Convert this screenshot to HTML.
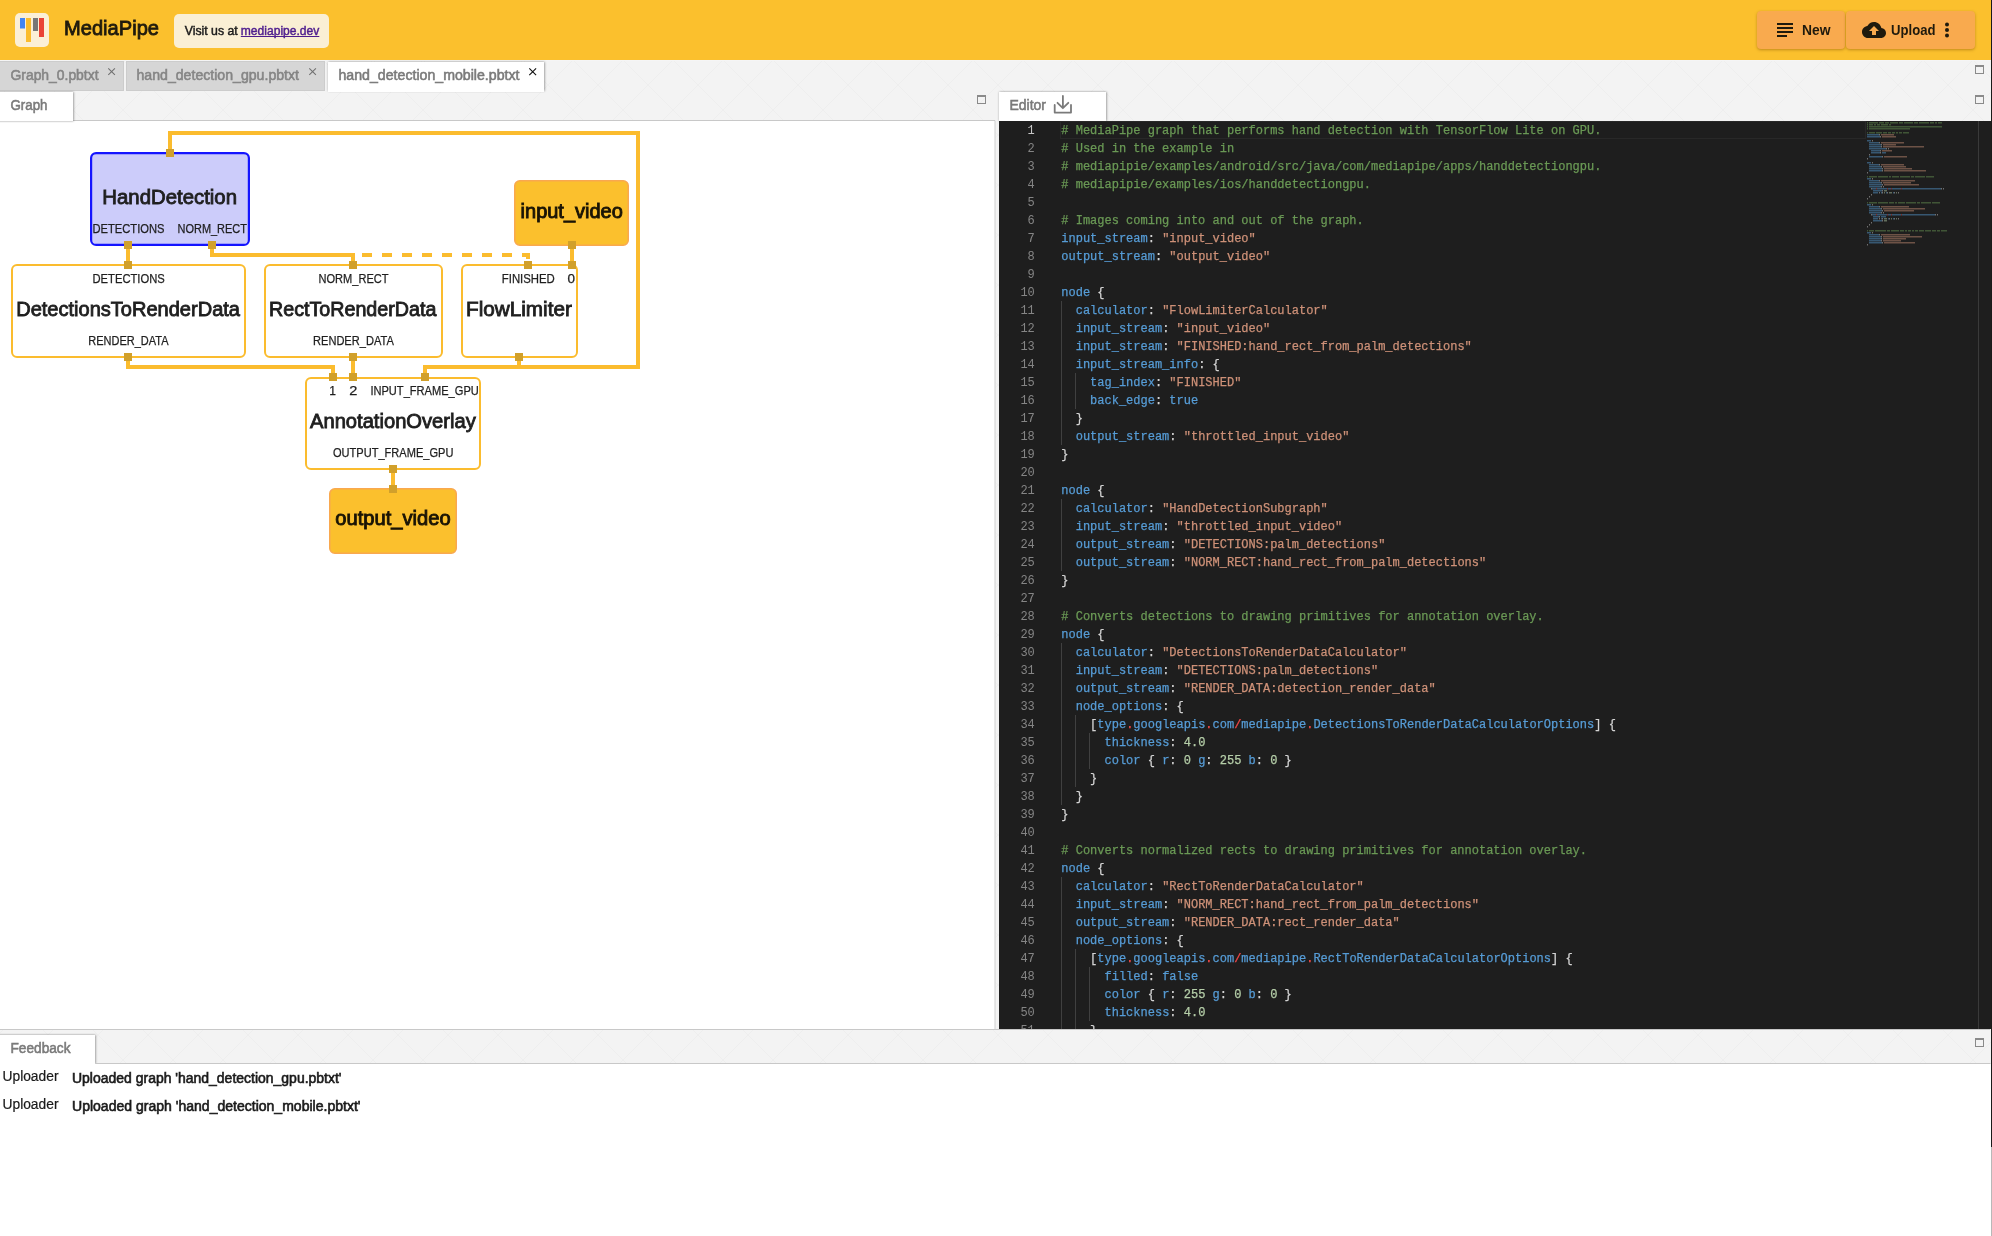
<!DOCTYPE html><html><head><meta charset="utf-8"><title>MediaPipe Visualizer</title><style>
html,body{margin:0;padding:0;width:1992px;height:1236px;overflow:hidden;background:#fff;font-family:"Liberation Sans", sans-serif;}
.abs{position:absolute;}
svg text{font-family:"Liberation Sans", sans-serif;}
svg .mono text, svg text.mono{font-family:"Liberation Mono", monospace;}
svg .mono text tspan{stroke-width:0.25px;}

</style></head><body>
<svg class="abs" style="left:0;top:0;will-change:transform" width="1992" height="1236" viewBox="0 0 1992 1236">
<defs>
<pattern id="dia" patternUnits="userSpaceOnUse" x="23" y="60" width="50" height="50">
<rect width="50" height="50" fill="#F3F3F3"/>
<path d="M0 0L50 50M50 0L0 50" stroke="#EEEEEE" stroke-width="1"/>
</pattern>
<filter id="btnsh" x="-10%" y="-10%" width="120%" height="140%"><feDropShadow dx="0" dy="1.5" stdDeviation="1.2" flood-color="#8a5a00" flood-opacity="0.45"/></filter>
<filter id="tabsh" x="-20%" y="-20%" width="140%" height="140%"><feDropShadow dx="0.5" dy="0" stdDeviation="1.1" flood-color="#000" flood-opacity="0.45"/></filter>
</defs>
<rect x="0" y="60" width="1992" height="1176" fill="url(#dia)"/>
<rect x="0" y="0" width="1992" height="60" fill="#FBC02D"/>
<rect x="15" y="13" width="34" height="34" rx="5" fill="#FBEFD6"/>
<rect x="20" y="18" width="5" height="10.5" fill="#4285F4"/>
<rect x="26" y="18" width="5" height="24" fill="#FBBC2D"/>
<rect x="33" y="18" width="5" height="13" fill="#777"/>
<rect x="39" y="18" width="5" height="19" fill="#EA4335"/>
<text x="64" y="35.3" font-size="21" font-weight="normal" fill="#1F1A0D" text-anchor="start" textLength="95" lengthAdjust="spacingAndGlyphs" stroke="#1F1A0D" stroke-width="0.85">MediaPipe</text>
<rect x="174" y="14" width="155" height="34" rx="5" fill="#FAEFD4"/>
<text x="184.7" y="35" font-size="12.3" font-weight="normal" fill="#1A1A1A" text-anchor="start" textLength="53" lengthAdjust="spacingAndGlyphs" stroke="#1A1A1A" stroke-width="0.45">Visit us at</text>
<text x="240.8" y="35" font-size="12.3" font-weight="normal" fill="#4E1D8E" text-anchor="start" textLength="78.5" lengthAdjust="spacingAndGlyphs" stroke="#4E1D8E" stroke-width="0.45">mediapipe.dev</text>
<rect x="240.8" y="36" width="78.5" height="1" fill="#4E1D8E"/>
</svg>
<div class="abs" style="left:1757px;top:11px;width:88px;height:38px;background:#F9AA4E;border-radius:4px;box-shadow:0 1px 3px rgba(120,70,0,.45)"></div>
<div class="abs" style="left:1846px;top:11px;width:129px;height:38px;background:#F9AA4E;border-radius:4px;box-shadow:0 1px 3px rgba(120,70,0,.45)"></div>
<svg class="abs" style="left:0;top:0;will-change:transform" width="1992" height="1236" viewBox="0 0 1992 1236">
<g fill="#1F1A0D"><rect x="1777" y="23" width="16" height="2"/><rect x="1777" y="27" width="16" height="2"/><rect x="1777" y="31" width="16" height="2"/><rect x="1777" y="35" width="10" height="2"/></g>
<text x="1802" y="35.3" font-size="14.5" font-weight="bold" fill="#1F1A0D" text-anchor="start" textLength="28.5" lengthAdjust="spacingAndGlyphs">New</text>
<g transform="translate(1862,18) scale(1)"><path fill="#1F1A0D" d="M19.35 10.04C18.67 6.59 15.64 4 12 4 9.11 4 6.6 5.64 5.35 8.04 2.34 8.36 0 10.91 0 14c0 3.31 2.69 6 6 6h13c2.76 0 5-2.24 5-5 0-2.64-2.05-4.78-4.65-4.96zM14 13v4h-4v-4H7l5-5 5 5h-3z"/></g>
<text x="1891" y="35.3" font-size="14.5" font-weight="bold" fill="#1F1A0D" text-anchor="start" textLength="44.5" lengthAdjust="spacingAndGlyphs">Upload</text>
<g fill="#1F1A0D"><circle cx="1947" cy="24.5" r="2"/><circle cx="1947" cy="30" r="2"/><circle cx="1947" cy="35.5" r="2"/></g>
<rect x="0" y="60" width="1992" height="1" fill="#F5F5F5"/>
<rect x="-1" y="61.5" width="124.5" height="29" fill="#D6D6D6" stroke="#CCCCCC" stroke-width="1"/>
<rect x="126.5" y="61.5" width="198" height="29" fill="#D6D6D6" stroke="#CCCCCC" stroke-width="1"/>
<rect x="328" y="62" width="216" height="29" fill="#FFFFFF" filter="url(#tabsh)"/>
<rect x="328" y="89" width="216" height="3" fill="#FFFFFF"/>
<text x="10.5" y="79.8" font-size="14" font-weight="normal" fill="#858585" text-anchor="start" textLength="88" lengthAdjust="spacingAndGlyphs" stroke="#858585" stroke-width="0.55">Graph_0.pbtxt</text>
<text x="136.5" y="79.8" font-size="14" font-weight="normal" fill="#858585" text-anchor="start" textLength="162.5" lengthAdjust="spacingAndGlyphs" stroke="#858585" stroke-width="0.55">hand_detection_gpu.pbtxt</text>
<text x="338.5" y="79.8" font-size="14" font-weight="normal" fill="#7A7A7A" text-anchor="start" textLength="181" lengthAdjust="spacingAndGlyphs" stroke="#7A7A7A" stroke-width="0.55">hand_detection_mobile.pbtxt</text>
<path d="M108.3 68.3L114.89999999999999 74.89999999999999M114.89999999999999 68.3L108.3 74.89999999999999" stroke="#707070" stroke-width="1.05" fill="none"/>
<path d="M309.3 68.3L315.90000000000003 74.89999999999999M315.90000000000003 68.3L309.3 74.89999999999999" stroke="#707070" stroke-width="1.05" fill="none"/>
<path d="M529.3 68.3L536.0999999999999 75.1M536.0999999999999 68.3L529.3 75.1" stroke="#111111" stroke-width="1.1" fill="none"/>
<rect x="0" y="120.5" width="995" height="909" fill="#FFFFFF"/>
<rect x="994.5" y="120.5" width="1" height="909" fill="#D0D0D0"/>
<rect x="0" y="120" width="995" height="1" fill="#C8C8C8"/>
<rect x="-5" y="92" width="78" height="29" fill="#FFFFFF" filter="url(#tabsh)"/>
<text x="10.5" y="110" font-size="14" font-weight="normal" fill="#7A7A7A" text-anchor="start" textLength="37" lengthAdjust="spacingAndGlyphs" stroke="#7A7A7A" stroke-width="0.55">Graph</text>
<rect x="977.5" y="95.5" width="8" height="8" fill="none" stroke="#8A8A8A" stroke-width="1"/><rect x="977" y="95" width="9" height="2" fill="#8A8A8A"/>
<rect x="1975.5" y="65.5" width="8" height="8" fill="none" stroke="#8A8A8A" stroke-width="1"/><rect x="1975" y="65" width="9" height="2" fill="#8A8A8A"/>
<rect x="1975.5" y="95.5" width="8" height="8" fill="none" stroke="#8A8A8A" stroke-width="1"/><rect x="1975" y="95" width="9" height="2" fill="#8A8A8A"/>
<rect x="1975.5" y="1038.5" width="8" height="8" fill="none" stroke="#8A8A8A" stroke-width="1"/><rect x="1975" y="1038" width="9" height="2" fill="#8A8A8A"/>
<rect x="999" y="92" width="107" height="29" fill="#FFFFFF" filter="url(#tabsh)"/>
<text x="1009.5" y="109.8" font-size="14" font-weight="normal" fill="#7A7A7A" text-anchor="start" textLength="36.5" lengthAdjust="spacingAndGlyphs" stroke="#7A7A7A" stroke-width="0.55">Editor</text>
<g stroke="#7A7A7A" stroke-width="1.8" fill="none" stroke-linecap="round" stroke-linejoin="round"><path d="M1062.9 96V108M1057.5 102.8L1062.9 108.2L1068.3 102.8"/><path d="M1054.7 105V112.6H1071V105"/></g>
<rect x="999" y="121" width="992" height="908" fill="#1E1E1E"/>
<svg x="999" y="121" width="992" height="908" viewBox="999 121 992 908" class="mono">
<rect x="1060.5" y="121.5" width="805" height="17" fill="none" stroke="#282828" stroke-width="1"/>
<text x="1034.8" y="134" font-size="12" fill="#C6C6C6" text-anchor="end">1</text>
<text x="1061.3" y="134" font-size="12" xml:space="preserve"><tspan fill="#D4D4D4" stroke="#D4D4D4"></tspan><tspan fill="#6A9955" stroke="#6A9955"># MediaPipe graph that performs hand detection with TensorFlow Lite on GPU.</tspan></text>
<text x="1034.8" y="152" font-size="12" fill="#858585" text-anchor="end">2</text>
<text x="1061.3" y="152" font-size="12" xml:space="preserve"><tspan fill="#D4D4D4" stroke="#D4D4D4"></tspan><tspan fill="#6A9955" stroke="#6A9955"># Used in the example in</tspan></text>
<text x="1034.8" y="170" font-size="12" fill="#858585" text-anchor="end">3</text>
<text x="1061.3" y="170" font-size="12" xml:space="preserve"><tspan fill="#D4D4D4" stroke="#D4D4D4"></tspan><tspan fill="#6A9955" stroke="#6A9955"># mediapipie/examples/android/src/java/com/mediapipe/apps/handdetectiongpu.</tspan></text>
<text x="1034.8" y="188" font-size="12" fill="#858585" text-anchor="end">4</text>
<text x="1061.3" y="188" font-size="12" xml:space="preserve"><tspan fill="#D4D4D4" stroke="#D4D4D4"></tspan><tspan fill="#6A9955" stroke="#6A9955"># mediapipie/examples/ios/handdetectiongpu.</tspan></text>
<text x="1034.8" y="206" font-size="12" fill="#858585" text-anchor="end">5</text>
<text x="1061.3" y="206" font-size="12" xml:space="preserve"></text>
<text x="1034.8" y="224" font-size="12" fill="#858585" text-anchor="end">6</text>
<text x="1061.3" y="224" font-size="12" xml:space="preserve"><tspan fill="#D4D4D4" stroke="#D4D4D4"></tspan><tspan fill="#6A9955" stroke="#6A9955"># Images coming into and out of the graph.</tspan></text>
<text x="1034.8" y="242" font-size="12" fill="#858585" text-anchor="end">7</text>
<text x="1061.3" y="242" font-size="12" xml:space="preserve"><tspan fill="#569CD6" stroke="#569CD6">input_stream</tspan><tspan fill="#D4D4D4" stroke="#D4D4D4">:</tspan><tspan fill="#D4D4D4" stroke="#D4D4D4"> </tspan><tspan fill="#CE9178" stroke="#CE9178">&quot;input_video&quot;</tspan></text>
<text x="1034.8" y="260" font-size="12" fill="#858585" text-anchor="end">8</text>
<text x="1061.3" y="260" font-size="12" xml:space="preserve"><tspan fill="#569CD6" stroke="#569CD6">output_stream</tspan><tspan fill="#D4D4D4" stroke="#D4D4D4">:</tspan><tspan fill="#D4D4D4" stroke="#D4D4D4"> </tspan><tspan fill="#CE9178" stroke="#CE9178">&quot;output_video&quot;</tspan></text>
<text x="1034.8" y="278" font-size="12" fill="#858585" text-anchor="end">9</text>
<text x="1061.3" y="278" font-size="12" xml:space="preserve"></text>
<text x="1034.8" y="296" font-size="12" fill="#858585" text-anchor="end">10</text>
<text x="1061.3" y="296" font-size="12" xml:space="preserve"><tspan fill="#569CD6" stroke="#569CD6">node</tspan><tspan fill="#D4D4D4" stroke="#D4D4D4"> </tspan><tspan fill="#D4D4D4" stroke="#D4D4D4">{</tspan></text>
<text x="1034.8" y="314" font-size="12" fill="#858585" text-anchor="end">11</text>
<text x="1061.3" y="314" font-size="12" xml:space="preserve"><tspan fill="#D4D4D4" stroke="#D4D4D4">  </tspan><tspan fill="#569CD6" stroke="#569CD6">calculator</tspan><tspan fill="#D4D4D4" stroke="#D4D4D4">:</tspan><tspan fill="#D4D4D4" stroke="#D4D4D4"> </tspan><tspan fill="#CE9178" stroke="#CE9178">&quot;FlowLimiterCalculator&quot;</tspan></text>
<text x="1034.8" y="332" font-size="12" fill="#858585" text-anchor="end">12</text>
<text x="1061.3" y="332" font-size="12" xml:space="preserve"><tspan fill="#D4D4D4" stroke="#D4D4D4">  </tspan><tspan fill="#569CD6" stroke="#569CD6">input_stream</tspan><tspan fill="#D4D4D4" stroke="#D4D4D4">:</tspan><tspan fill="#D4D4D4" stroke="#D4D4D4"> </tspan><tspan fill="#CE9178" stroke="#CE9178">&quot;input_video&quot;</tspan></text>
<text x="1034.8" y="350" font-size="12" fill="#858585" text-anchor="end">13</text>
<text x="1061.3" y="350" font-size="12" xml:space="preserve"><tspan fill="#D4D4D4" stroke="#D4D4D4">  </tspan><tspan fill="#569CD6" stroke="#569CD6">input_stream</tspan><tspan fill="#D4D4D4" stroke="#D4D4D4">:</tspan><tspan fill="#D4D4D4" stroke="#D4D4D4"> </tspan><tspan fill="#CE9178" stroke="#CE9178">&quot;FINISHED:hand_rect_from_palm_detections&quot;</tspan></text>
<text x="1034.8" y="368" font-size="12" fill="#858585" text-anchor="end">14</text>
<text x="1061.3" y="368" font-size="12" xml:space="preserve"><tspan fill="#D4D4D4" stroke="#D4D4D4">  </tspan><tspan fill="#569CD6" stroke="#569CD6">input_stream_info</tspan><tspan fill="#D4D4D4" stroke="#D4D4D4">:</tspan><tspan fill="#D4D4D4" stroke="#D4D4D4"> </tspan><tspan fill="#D4D4D4" stroke="#D4D4D4">{</tspan></text>
<text x="1034.8" y="386" font-size="12" fill="#858585" text-anchor="end">15</text>
<text x="1061.3" y="386" font-size="12" xml:space="preserve"><tspan fill="#D4D4D4" stroke="#D4D4D4">    </tspan><tspan fill="#569CD6" stroke="#569CD6">tag_index</tspan><tspan fill="#D4D4D4" stroke="#D4D4D4">:</tspan><tspan fill="#D4D4D4" stroke="#D4D4D4"> </tspan><tspan fill="#CE9178" stroke="#CE9178">&quot;FINISHED&quot;</tspan></text>
<text x="1034.8" y="404" font-size="12" fill="#858585" text-anchor="end">16</text>
<text x="1061.3" y="404" font-size="12" xml:space="preserve"><tspan fill="#D4D4D4" stroke="#D4D4D4">    </tspan><tspan fill="#569CD6" stroke="#569CD6">back_edge</tspan><tspan fill="#D4D4D4" stroke="#D4D4D4">:</tspan><tspan fill="#D4D4D4" stroke="#D4D4D4"> </tspan><tspan fill="#569CD6" stroke="#569CD6">true</tspan></text>
<text x="1034.8" y="422" font-size="12" fill="#858585" text-anchor="end">17</text>
<text x="1061.3" y="422" font-size="12" xml:space="preserve"><tspan fill="#D4D4D4" stroke="#D4D4D4">  </tspan><tspan fill="#D4D4D4" stroke="#D4D4D4">}</tspan></text>
<text x="1034.8" y="440" font-size="12" fill="#858585" text-anchor="end">18</text>
<text x="1061.3" y="440" font-size="12" xml:space="preserve"><tspan fill="#D4D4D4" stroke="#D4D4D4">  </tspan><tspan fill="#569CD6" stroke="#569CD6">output_stream</tspan><tspan fill="#D4D4D4" stroke="#D4D4D4">:</tspan><tspan fill="#D4D4D4" stroke="#D4D4D4"> </tspan><tspan fill="#CE9178" stroke="#CE9178">&quot;throttled_input_video&quot;</tspan></text>
<text x="1034.8" y="458" font-size="12" fill="#858585" text-anchor="end">19</text>
<text x="1061.3" y="458" font-size="12" xml:space="preserve"><tspan fill="#D4D4D4" stroke="#D4D4D4">}</tspan></text>
<text x="1034.8" y="476" font-size="12" fill="#858585" text-anchor="end">20</text>
<text x="1061.3" y="476" font-size="12" xml:space="preserve"></text>
<text x="1034.8" y="494" font-size="12" fill="#858585" text-anchor="end">21</text>
<text x="1061.3" y="494" font-size="12" xml:space="preserve"><tspan fill="#569CD6" stroke="#569CD6">node</tspan><tspan fill="#D4D4D4" stroke="#D4D4D4"> </tspan><tspan fill="#D4D4D4" stroke="#D4D4D4">{</tspan></text>
<text x="1034.8" y="512" font-size="12" fill="#858585" text-anchor="end">22</text>
<text x="1061.3" y="512" font-size="12" xml:space="preserve"><tspan fill="#D4D4D4" stroke="#D4D4D4">  </tspan><tspan fill="#569CD6" stroke="#569CD6">calculator</tspan><tspan fill="#D4D4D4" stroke="#D4D4D4">:</tspan><tspan fill="#D4D4D4" stroke="#D4D4D4"> </tspan><tspan fill="#CE9178" stroke="#CE9178">&quot;HandDetectionSubgraph&quot;</tspan></text>
<text x="1034.8" y="530" font-size="12" fill="#858585" text-anchor="end">23</text>
<text x="1061.3" y="530" font-size="12" xml:space="preserve"><tspan fill="#D4D4D4" stroke="#D4D4D4">  </tspan><tspan fill="#569CD6" stroke="#569CD6">input_stream</tspan><tspan fill="#D4D4D4" stroke="#D4D4D4">:</tspan><tspan fill="#D4D4D4" stroke="#D4D4D4"> </tspan><tspan fill="#CE9178" stroke="#CE9178">&quot;throttled_input_video&quot;</tspan></text>
<text x="1034.8" y="548" font-size="12" fill="#858585" text-anchor="end">24</text>
<text x="1061.3" y="548" font-size="12" xml:space="preserve"><tspan fill="#D4D4D4" stroke="#D4D4D4">  </tspan><tspan fill="#569CD6" stroke="#569CD6">output_stream</tspan><tspan fill="#D4D4D4" stroke="#D4D4D4">:</tspan><tspan fill="#D4D4D4" stroke="#D4D4D4"> </tspan><tspan fill="#CE9178" stroke="#CE9178">&quot;DETECTIONS:palm_detections&quot;</tspan></text>
<text x="1034.8" y="566" font-size="12" fill="#858585" text-anchor="end">25</text>
<text x="1061.3" y="566" font-size="12" xml:space="preserve"><tspan fill="#D4D4D4" stroke="#D4D4D4">  </tspan><tspan fill="#569CD6" stroke="#569CD6">output_stream</tspan><tspan fill="#D4D4D4" stroke="#D4D4D4">:</tspan><tspan fill="#D4D4D4" stroke="#D4D4D4"> </tspan><tspan fill="#CE9178" stroke="#CE9178">&quot;NORM_RECT:hand_rect_from_palm_detections&quot;</tspan></text>
<text x="1034.8" y="584" font-size="12" fill="#858585" text-anchor="end">26</text>
<text x="1061.3" y="584" font-size="12" xml:space="preserve"><tspan fill="#D4D4D4" stroke="#D4D4D4">}</tspan></text>
<text x="1034.8" y="602" font-size="12" fill="#858585" text-anchor="end">27</text>
<text x="1061.3" y="602" font-size="12" xml:space="preserve"></text>
<text x="1034.8" y="620" font-size="12" fill="#858585" text-anchor="end">28</text>
<text x="1061.3" y="620" font-size="12" xml:space="preserve"><tspan fill="#D4D4D4" stroke="#D4D4D4"></tspan><tspan fill="#6A9955" stroke="#6A9955"># Converts detections to drawing primitives for annotation overlay.</tspan></text>
<text x="1034.8" y="638" font-size="12" fill="#858585" text-anchor="end">29</text>
<text x="1061.3" y="638" font-size="12" xml:space="preserve"><tspan fill="#569CD6" stroke="#569CD6">node</tspan><tspan fill="#D4D4D4" stroke="#D4D4D4"> </tspan><tspan fill="#D4D4D4" stroke="#D4D4D4">{</tspan></text>
<text x="1034.8" y="656" font-size="12" fill="#858585" text-anchor="end">30</text>
<text x="1061.3" y="656" font-size="12" xml:space="preserve"><tspan fill="#D4D4D4" stroke="#D4D4D4">  </tspan><tspan fill="#569CD6" stroke="#569CD6">calculator</tspan><tspan fill="#D4D4D4" stroke="#D4D4D4">:</tspan><tspan fill="#D4D4D4" stroke="#D4D4D4"> </tspan><tspan fill="#CE9178" stroke="#CE9178">&quot;DetectionsToRenderDataCalculator&quot;</tspan></text>
<text x="1034.8" y="674" font-size="12" fill="#858585" text-anchor="end">31</text>
<text x="1061.3" y="674" font-size="12" xml:space="preserve"><tspan fill="#D4D4D4" stroke="#D4D4D4">  </tspan><tspan fill="#569CD6" stroke="#569CD6">input_stream</tspan><tspan fill="#D4D4D4" stroke="#D4D4D4">:</tspan><tspan fill="#D4D4D4" stroke="#D4D4D4"> </tspan><tspan fill="#CE9178" stroke="#CE9178">&quot;DETECTIONS:palm_detections&quot;</tspan></text>
<text x="1034.8" y="692" font-size="12" fill="#858585" text-anchor="end">32</text>
<text x="1061.3" y="692" font-size="12" xml:space="preserve"><tspan fill="#D4D4D4" stroke="#D4D4D4">  </tspan><tspan fill="#569CD6" stroke="#569CD6">output_stream</tspan><tspan fill="#D4D4D4" stroke="#D4D4D4">:</tspan><tspan fill="#D4D4D4" stroke="#D4D4D4"> </tspan><tspan fill="#CE9178" stroke="#CE9178">&quot;RENDER_DATA:detection_render_data&quot;</tspan></text>
<text x="1034.8" y="710" font-size="12" fill="#858585" text-anchor="end">33</text>
<text x="1061.3" y="710" font-size="12" xml:space="preserve"><tspan fill="#D4D4D4" stroke="#D4D4D4">  </tspan><tspan fill="#569CD6" stroke="#569CD6">node_options</tspan><tspan fill="#D4D4D4" stroke="#D4D4D4">:</tspan><tspan fill="#D4D4D4" stroke="#D4D4D4"> </tspan><tspan fill="#D4D4D4" stroke="#D4D4D4">{</tspan></text>
<text x="1034.8" y="728" font-size="12" fill="#858585" text-anchor="end">34</text>
<text x="1061.3" y="728" font-size="12" xml:space="preserve"><tspan fill="#D4D4D4" stroke="#D4D4D4">    </tspan><tspan fill="#D4D4D4" stroke="#D4D4D4">[</tspan><tspan fill="#569CD6" stroke="#569CD6">type</tspan><tspan fill="#F44747" stroke="#F44747">.</tspan><tspan fill="#569CD6" stroke="#569CD6">googleapis</tspan><tspan fill="#F44747" stroke="#F44747">.</tspan><tspan fill="#569CD6" stroke="#569CD6">com</tspan><tspan fill="#F44747" stroke="#F44747">/</tspan><tspan fill="#569CD6" stroke="#569CD6">mediapipe</tspan><tspan fill="#F44747" stroke="#F44747">.</tspan><tspan fill="#569CD6" stroke="#569CD6">DetectionsToRenderDataCalculatorOptions</tspan><tspan fill="#D4D4D4" stroke="#D4D4D4">]</tspan><tspan fill="#D4D4D4" stroke="#D4D4D4"> </tspan><tspan fill="#D4D4D4" stroke="#D4D4D4">{</tspan></text>
<text x="1034.8" y="746" font-size="12" fill="#858585" text-anchor="end">35</text>
<text x="1061.3" y="746" font-size="12" xml:space="preserve"><tspan fill="#D4D4D4" stroke="#D4D4D4">      </tspan><tspan fill="#569CD6" stroke="#569CD6">thickness</tspan><tspan fill="#D4D4D4" stroke="#D4D4D4">:</tspan><tspan fill="#D4D4D4" stroke="#D4D4D4"> </tspan><tspan fill="#B5CEA8" stroke="#B5CEA8">4.0</tspan></text>
<text x="1034.8" y="764" font-size="12" fill="#858585" text-anchor="end">36</text>
<text x="1061.3" y="764" font-size="12" xml:space="preserve"><tspan fill="#D4D4D4" stroke="#D4D4D4">      </tspan><tspan fill="#569CD6" stroke="#569CD6">color</tspan><tspan fill="#D4D4D4" stroke="#D4D4D4"> </tspan><tspan fill="#D4D4D4" stroke="#D4D4D4">{</tspan><tspan fill="#D4D4D4" stroke="#D4D4D4"> </tspan><tspan fill="#569CD6" stroke="#569CD6">r</tspan><tspan fill="#D4D4D4" stroke="#D4D4D4">:</tspan><tspan fill="#D4D4D4" stroke="#D4D4D4"> </tspan><tspan fill="#B5CEA8" stroke="#B5CEA8">0</tspan><tspan fill="#D4D4D4" stroke="#D4D4D4"> </tspan><tspan fill="#569CD6" stroke="#569CD6">g</tspan><tspan fill="#D4D4D4" stroke="#D4D4D4">:</tspan><tspan fill="#D4D4D4" stroke="#D4D4D4"> </tspan><tspan fill="#B5CEA8" stroke="#B5CEA8">255</tspan><tspan fill="#D4D4D4" stroke="#D4D4D4"> </tspan><tspan fill="#569CD6" stroke="#569CD6">b</tspan><tspan fill="#D4D4D4" stroke="#D4D4D4">:</tspan><tspan fill="#D4D4D4" stroke="#D4D4D4"> </tspan><tspan fill="#B5CEA8" stroke="#B5CEA8">0</tspan><tspan fill="#D4D4D4" stroke="#D4D4D4"> </tspan><tspan fill="#D4D4D4" stroke="#D4D4D4">}</tspan></text>
<text x="1034.8" y="782" font-size="12" fill="#858585" text-anchor="end">37</text>
<text x="1061.3" y="782" font-size="12" xml:space="preserve"><tspan fill="#D4D4D4" stroke="#D4D4D4">    </tspan><tspan fill="#D4D4D4" stroke="#D4D4D4">}</tspan></text>
<text x="1034.8" y="800" font-size="12" fill="#858585" text-anchor="end">38</text>
<text x="1061.3" y="800" font-size="12" xml:space="preserve"><tspan fill="#D4D4D4" stroke="#D4D4D4">  </tspan><tspan fill="#D4D4D4" stroke="#D4D4D4">}</tspan></text>
<text x="1034.8" y="818" font-size="12" fill="#858585" text-anchor="end">39</text>
<text x="1061.3" y="818" font-size="12" xml:space="preserve"><tspan fill="#D4D4D4" stroke="#D4D4D4">}</tspan></text>
<text x="1034.8" y="836" font-size="12" fill="#858585" text-anchor="end">40</text>
<text x="1061.3" y="836" font-size="12" xml:space="preserve"></text>
<text x="1034.8" y="854" font-size="12" fill="#858585" text-anchor="end">41</text>
<text x="1061.3" y="854" font-size="12" xml:space="preserve"><tspan fill="#D4D4D4" stroke="#D4D4D4"></tspan><tspan fill="#6A9955" stroke="#6A9955"># Converts normalized rects to drawing primitives for annotation overlay.</tspan></text>
<text x="1034.8" y="872" font-size="12" fill="#858585" text-anchor="end">42</text>
<text x="1061.3" y="872" font-size="12" xml:space="preserve"><tspan fill="#569CD6" stroke="#569CD6">node</tspan><tspan fill="#D4D4D4" stroke="#D4D4D4"> </tspan><tspan fill="#D4D4D4" stroke="#D4D4D4">{</tspan></text>
<text x="1034.8" y="890" font-size="12" fill="#858585" text-anchor="end">43</text>
<text x="1061.3" y="890" font-size="12" xml:space="preserve"><tspan fill="#D4D4D4" stroke="#D4D4D4">  </tspan><tspan fill="#569CD6" stroke="#569CD6">calculator</tspan><tspan fill="#D4D4D4" stroke="#D4D4D4">:</tspan><tspan fill="#D4D4D4" stroke="#D4D4D4"> </tspan><tspan fill="#CE9178" stroke="#CE9178">&quot;RectToRenderDataCalculator&quot;</tspan></text>
<text x="1034.8" y="908" font-size="12" fill="#858585" text-anchor="end">44</text>
<text x="1061.3" y="908" font-size="12" xml:space="preserve"><tspan fill="#D4D4D4" stroke="#D4D4D4">  </tspan><tspan fill="#569CD6" stroke="#569CD6">input_stream</tspan><tspan fill="#D4D4D4" stroke="#D4D4D4">:</tspan><tspan fill="#D4D4D4" stroke="#D4D4D4"> </tspan><tspan fill="#CE9178" stroke="#CE9178">&quot;NORM_RECT:hand_rect_from_palm_detections&quot;</tspan></text>
<text x="1034.8" y="926" font-size="12" fill="#858585" text-anchor="end">45</text>
<text x="1061.3" y="926" font-size="12" xml:space="preserve"><tspan fill="#D4D4D4" stroke="#D4D4D4">  </tspan><tspan fill="#569CD6" stroke="#569CD6">output_stream</tspan><tspan fill="#D4D4D4" stroke="#D4D4D4">:</tspan><tspan fill="#D4D4D4" stroke="#D4D4D4"> </tspan><tspan fill="#CE9178" stroke="#CE9178">&quot;RENDER_DATA:rect_render_data&quot;</tspan></text>
<text x="1034.8" y="944" font-size="12" fill="#858585" text-anchor="end">46</text>
<text x="1061.3" y="944" font-size="12" xml:space="preserve"><tspan fill="#D4D4D4" stroke="#D4D4D4">  </tspan><tspan fill="#569CD6" stroke="#569CD6">node_options</tspan><tspan fill="#D4D4D4" stroke="#D4D4D4">:</tspan><tspan fill="#D4D4D4" stroke="#D4D4D4"> </tspan><tspan fill="#D4D4D4" stroke="#D4D4D4">{</tspan></text>
<text x="1034.8" y="962" font-size="12" fill="#858585" text-anchor="end">47</text>
<text x="1061.3" y="962" font-size="12" xml:space="preserve"><tspan fill="#D4D4D4" stroke="#D4D4D4">    </tspan><tspan fill="#D4D4D4" stroke="#D4D4D4">[</tspan><tspan fill="#569CD6" stroke="#569CD6">type</tspan><tspan fill="#F44747" stroke="#F44747">.</tspan><tspan fill="#569CD6" stroke="#569CD6">googleapis</tspan><tspan fill="#F44747" stroke="#F44747">.</tspan><tspan fill="#569CD6" stroke="#569CD6">com</tspan><tspan fill="#F44747" stroke="#F44747">/</tspan><tspan fill="#569CD6" stroke="#569CD6">mediapipe</tspan><tspan fill="#F44747" stroke="#F44747">.</tspan><tspan fill="#569CD6" stroke="#569CD6">RectToRenderDataCalculatorOptions</tspan><tspan fill="#D4D4D4" stroke="#D4D4D4">]</tspan><tspan fill="#D4D4D4" stroke="#D4D4D4"> </tspan><tspan fill="#D4D4D4" stroke="#D4D4D4">{</tspan></text>
<text x="1034.8" y="980" font-size="12" fill="#858585" text-anchor="end">48</text>
<text x="1061.3" y="980" font-size="12" xml:space="preserve"><tspan fill="#D4D4D4" stroke="#D4D4D4">      </tspan><tspan fill="#569CD6" stroke="#569CD6">filled</tspan><tspan fill="#D4D4D4" stroke="#D4D4D4">:</tspan><tspan fill="#D4D4D4" stroke="#D4D4D4"> </tspan><tspan fill="#569CD6" stroke="#569CD6">false</tspan></text>
<text x="1034.8" y="998" font-size="12" fill="#858585" text-anchor="end">49</text>
<text x="1061.3" y="998" font-size="12" xml:space="preserve"><tspan fill="#D4D4D4" stroke="#D4D4D4">      </tspan><tspan fill="#569CD6" stroke="#569CD6">color</tspan><tspan fill="#D4D4D4" stroke="#D4D4D4"> </tspan><tspan fill="#D4D4D4" stroke="#D4D4D4">{</tspan><tspan fill="#D4D4D4" stroke="#D4D4D4"> </tspan><tspan fill="#569CD6" stroke="#569CD6">r</tspan><tspan fill="#D4D4D4" stroke="#D4D4D4">:</tspan><tspan fill="#D4D4D4" stroke="#D4D4D4"> </tspan><tspan fill="#B5CEA8" stroke="#B5CEA8">255</tspan><tspan fill="#D4D4D4" stroke="#D4D4D4"> </tspan><tspan fill="#569CD6" stroke="#569CD6">g</tspan><tspan fill="#D4D4D4" stroke="#D4D4D4">:</tspan><tspan fill="#D4D4D4" stroke="#D4D4D4"> </tspan><tspan fill="#B5CEA8" stroke="#B5CEA8">0</tspan><tspan fill="#D4D4D4" stroke="#D4D4D4"> </tspan><tspan fill="#569CD6" stroke="#569CD6">b</tspan><tspan fill="#D4D4D4" stroke="#D4D4D4">:</tspan><tspan fill="#D4D4D4" stroke="#D4D4D4"> </tspan><tspan fill="#B5CEA8" stroke="#B5CEA8">0</tspan><tspan fill="#D4D4D4" stroke="#D4D4D4"> </tspan><tspan fill="#D4D4D4" stroke="#D4D4D4">}</tspan></text>
<text x="1034.8" y="1016" font-size="12" fill="#858585" text-anchor="end">50</text>
<text x="1061.3" y="1016" font-size="12" xml:space="preserve"><tspan fill="#D4D4D4" stroke="#D4D4D4">      </tspan><tspan fill="#569CD6" stroke="#569CD6">thickness</tspan><tspan fill="#D4D4D4" stroke="#D4D4D4">:</tspan><tspan fill="#D4D4D4" stroke="#D4D4D4"> </tspan><tspan fill="#B5CEA8" stroke="#B5CEA8">4.0</tspan></text>
<text x="1034.8" y="1034" font-size="12" fill="#858585" text-anchor="end">51</text>
<text x="1061.3" y="1034" font-size="12" xml:space="preserve"><tspan fill="#D4D4D4" stroke="#D4D4D4">    </tspan><tspan fill="#D4D4D4" stroke="#D4D4D4">}</tspan></text>
<text x="1034.8" y="1052" font-size="12" fill="#858585" text-anchor="end">52</text>
<text x="1061.3" y="1052" font-size="12" xml:space="preserve"><tspan fill="#D4D4D4" stroke="#D4D4D4">  </tspan><tspan fill="#D4D4D4" stroke="#D4D4D4">}</tspan></text>
<rect x="1061" y="301" width="1" height="18" fill="#404040"/>
<rect x="1061" y="319" width="1" height="18" fill="#404040"/>
<rect x="1061" y="337" width="1" height="18" fill="#404040"/>
<rect x="1061" y="355" width="1" height="18" fill="#404040"/>
<rect x="1061" y="373" width="1" height="18" fill="#404040"/>
<rect x="1075" y="373" width="1" height="18" fill="#404040"/>
<rect x="1061" y="391" width="1" height="18" fill="#404040"/>
<rect x="1075" y="391" width="1" height="18" fill="#404040"/>
<rect x="1061" y="409" width="1" height="18" fill="#404040"/>
<rect x="1061" y="427" width="1" height="18" fill="#404040"/>
<rect x="1061" y="499" width="1" height="18" fill="#404040"/>
<rect x="1061" y="517" width="1" height="18" fill="#404040"/>
<rect x="1061" y="535" width="1" height="18" fill="#404040"/>
<rect x="1061" y="553" width="1" height="18" fill="#404040"/>
<rect x="1061" y="643" width="1" height="18" fill="#404040"/>
<rect x="1061" y="661" width="1" height="18" fill="#404040"/>
<rect x="1061" y="679" width="1" height="18" fill="#404040"/>
<rect x="1061" y="697" width="1" height="18" fill="#404040"/>
<rect x="1061" y="715" width="1" height="18" fill="#404040"/>
<rect x="1075" y="715" width="1" height="18" fill="#404040"/>
<rect x="1061" y="733" width="1" height="18" fill="#404040"/>
<rect x="1075" y="733" width="1" height="18" fill="#404040"/>
<rect x="1089" y="733" width="1" height="18" fill="#404040"/>
<rect x="1061" y="751" width="1" height="18" fill="#404040"/>
<rect x="1075" y="751" width="1" height="18" fill="#404040"/>
<rect x="1089" y="751" width="1" height="18" fill="#404040"/>
<rect x="1061" y="769" width="1" height="18" fill="#404040"/>
<rect x="1075" y="769" width="1" height="18" fill="#404040"/>
<rect x="1061" y="787" width="1" height="18" fill="#404040"/>
<rect x="1061" y="877" width="1" height="18" fill="#404040"/>
<rect x="1061" y="895" width="1" height="18" fill="#404040"/>
<rect x="1061" y="913" width="1" height="18" fill="#404040"/>
<rect x="1061" y="931" width="1" height="18" fill="#404040"/>
<rect x="1061" y="949" width="1" height="18" fill="#404040"/>
<rect x="1075" y="949" width="1" height="18" fill="#404040"/>
<rect x="1061" y="967" width="1" height="18" fill="#404040"/>
<rect x="1075" y="967" width="1" height="18" fill="#404040"/>
<rect x="1089" y="967" width="1" height="18" fill="#404040"/>
<rect x="1061" y="985" width="1" height="18" fill="#404040"/>
<rect x="1075" y="985" width="1" height="18" fill="#404040"/>
<rect x="1089" y="985" width="1" height="18" fill="#404040"/>
<rect x="1061" y="1003" width="1" height="18" fill="#404040"/>
<rect x="1075" y="1003" width="1" height="18" fill="#404040"/>
<rect x="1089" y="1003" width="1" height="18" fill="#404040"/>
<rect x="1061" y="1021" width="1" height="18" fill="#404040"/>
<rect x="1075" y="1021" width="1" height="18" fill="#404040"/>
<rect x="1061" y="1039" width="1" height="18" fill="#404040"/>
<rect x="1061" y="1129" width="1" height="18" fill="#404040"/>
<rect x="1061" y="1147" width="1" height="18" fill="#404040"/>
<rect x="1061" y="1165" width="1" height="18" fill="#404040"/>
<rect x="1061" y="1183" width="1" height="18" fill="#404040"/>
<rect x="1061" y="1201" width="1" height="18" fill="#404040"/>
<g opacity="0.45"><rect x="1867" y="122" width="1" height="1.5" fill="#6A9955"/><rect x="1869" y="122" width="9" height="1.5" fill="#6A9955"/><rect x="1879" y="122" width="5" height="1.5" fill="#6A9955"/><rect x="1885" y="122" width="4" height="1.5" fill="#6A9955"/><rect x="1890" y="122" width="8" height="1.5" fill="#6A9955"/><rect x="1899" y="122" width="4" height="1.5" fill="#6A9955"/><rect x="1904" y="122" width="9" height="1.5" fill="#6A9955"/><rect x="1914" y="122" width="4" height="1.5" fill="#6A9955"/><rect x="1919" y="122" width="10" height="1.5" fill="#6A9955"/><rect x="1930" y="122" width="4" height="1.5" fill="#6A9955"/><rect x="1935" y="122" width="2" height="1.5" fill="#6A9955"/><rect x="1938" y="122" width="4" height="1.5" fill="#6A9955"/><rect x="1867" y="124" width="1" height="1.5" fill="#6A9955"/><rect x="1869" y="124" width="4" height="1.5" fill="#6A9955"/><rect x="1874" y="124" width="2" height="1.5" fill="#6A9955"/><rect x="1877" y="124" width="3" height="1.5" fill="#6A9955"/><rect x="1881" y="124" width="7" height="1.5" fill="#6A9955"/><rect x="1889" y="124" width="2" height="1.5" fill="#6A9955"/><rect x="1867" y="126" width="1" height="1.5" fill="#6A9955"/><rect x="1869" y="126" width="73" height="1.5" fill="#6A9955"/><rect x="1867" y="128" width="1" height="1.5" fill="#6A9955"/><rect x="1869" y="128" width="41" height="1.5" fill="#6A9955"/><rect x="1867" y="132" width="1" height="1.5" fill="#6A9955"/><rect x="1869" y="132" width="6" height="1.5" fill="#6A9955"/><rect x="1876" y="132" width="6" height="1.5" fill="#6A9955"/><rect x="1883" y="132" width="4" height="1.5" fill="#6A9955"/><rect x="1888" y="132" width="3" height="1.5" fill="#6A9955"/><rect x="1892" y="132" width="3" height="1.5" fill="#6A9955"/><rect x="1896" y="132" width="2" height="1.5" fill="#6A9955"/><rect x="1899" y="132" width="3" height="1.5" fill="#6A9955"/><rect x="1903" y="132" width="6" height="1.5" fill="#6A9955"/><rect x="1867" y="134" width="12" height="1.5" fill="#569CD6"/><rect x="1879" y="134" width="1" height="1.5" fill="#D4D4D4"/><rect x="1881" y="134" width="13" height="1.5" fill="#CE9178"/><rect x="1867" y="136" width="13" height="1.5" fill="#569CD6"/><rect x="1880" y="136" width="1" height="1.5" fill="#D4D4D4"/><rect x="1882" y="136" width="14" height="1.5" fill="#CE9178"/><rect x="1867" y="140" width="4" height="1.5" fill="#569CD6"/><rect x="1872" y="140" width="1" height="1.5" fill="#D4D4D4"/><rect x="1869" y="142" width="10" height="1.5" fill="#569CD6"/><rect x="1879" y="142" width="1" height="1.5" fill="#D4D4D4"/><rect x="1881" y="142" width="23" height="1.5" fill="#CE9178"/><rect x="1869" y="144" width="12" height="1.5" fill="#569CD6"/><rect x="1881" y="144" width="1" height="1.5" fill="#D4D4D4"/><rect x="1883" y="144" width="13" height="1.5" fill="#CE9178"/><rect x="1869" y="146" width="12" height="1.5" fill="#569CD6"/><rect x="1881" y="146" width="1" height="1.5" fill="#D4D4D4"/><rect x="1883" y="146" width="41" height="1.5" fill="#CE9178"/><rect x="1869" y="148" width="17" height="1.5" fill="#569CD6"/><rect x="1886" y="148" width="1" height="1.5" fill="#D4D4D4"/><rect x="1888" y="148" width="1" height="1.5" fill="#D4D4D4"/><rect x="1871" y="150" width="9" height="1.5" fill="#569CD6"/><rect x="1880" y="150" width="1" height="1.5" fill="#D4D4D4"/><rect x="1882" y="150" width="10" height="1.5" fill="#CE9178"/><rect x="1871" y="152" width="9" height="1.5" fill="#569CD6"/><rect x="1880" y="152" width="1" height="1.5" fill="#D4D4D4"/><rect x="1882" y="152" width="4" height="1.5" fill="#569CD6"/><rect x="1869" y="154" width="1" height="1.5" fill="#D4D4D4"/><rect x="1869" y="156" width="13" height="1.5" fill="#569CD6"/><rect x="1882" y="156" width="1" height="1.5" fill="#D4D4D4"/><rect x="1884" y="156" width="23" height="1.5" fill="#CE9178"/><rect x="1867" y="158" width="1" height="1.5" fill="#D4D4D4"/><rect x="1867" y="162" width="4" height="1.5" fill="#569CD6"/><rect x="1872" y="162" width="1" height="1.5" fill="#D4D4D4"/><rect x="1869" y="164" width="10" height="1.5" fill="#569CD6"/><rect x="1879" y="164" width="1" height="1.5" fill="#D4D4D4"/><rect x="1881" y="164" width="23" height="1.5" fill="#CE9178"/><rect x="1869" y="166" width="12" height="1.5" fill="#569CD6"/><rect x="1881" y="166" width="1" height="1.5" fill="#D4D4D4"/><rect x="1883" y="166" width="23" height="1.5" fill="#CE9178"/><rect x="1869" y="168" width="13" height="1.5" fill="#569CD6"/><rect x="1882" y="168" width="1" height="1.5" fill="#D4D4D4"/><rect x="1884" y="168" width="28" height="1.5" fill="#CE9178"/><rect x="1869" y="170" width="13" height="1.5" fill="#569CD6"/><rect x="1882" y="170" width="1" height="1.5" fill="#D4D4D4"/><rect x="1884" y="170" width="42" height="1.5" fill="#CE9178"/><rect x="1867" y="172" width="1" height="1.5" fill="#D4D4D4"/><rect x="1867" y="176" width="1" height="1.5" fill="#6A9955"/><rect x="1869" y="176" width="8" height="1.5" fill="#6A9955"/><rect x="1878" y="176" width="10" height="1.5" fill="#6A9955"/><rect x="1889" y="176" width="2" height="1.5" fill="#6A9955"/><rect x="1892" y="176" width="7" height="1.5" fill="#6A9955"/><rect x="1900" y="176" width="10" height="1.5" fill="#6A9955"/><rect x="1911" y="176" width="3" height="1.5" fill="#6A9955"/><rect x="1915" y="176" width="10" height="1.5" fill="#6A9955"/><rect x="1926" y="176" width="8" height="1.5" fill="#6A9955"/><rect x="1867" y="178" width="4" height="1.5" fill="#569CD6"/><rect x="1872" y="178" width="1" height="1.5" fill="#D4D4D4"/><rect x="1869" y="180" width="10" height="1.5" fill="#569CD6"/><rect x="1879" y="180" width="1" height="1.5" fill="#D4D4D4"/><rect x="1881" y="180" width="34" height="1.5" fill="#CE9178"/><rect x="1869" y="182" width="12" height="1.5" fill="#569CD6"/><rect x="1881" y="182" width="1" height="1.5" fill="#D4D4D4"/><rect x="1883" y="182" width="28" height="1.5" fill="#CE9178"/><rect x="1869" y="184" width="13" height="1.5" fill="#569CD6"/><rect x="1882" y="184" width="1" height="1.5" fill="#D4D4D4"/><rect x="1884" y="184" width="35" height="1.5" fill="#CE9178"/><rect x="1869" y="186" width="12" height="1.5" fill="#569CD6"/><rect x="1881" y="186" width="1" height="1.5" fill="#D4D4D4"/><rect x="1883" y="186" width="1" height="1.5" fill="#D4D4D4"/><rect x="1871" y="188" width="1" height="1.5" fill="#D4D4D4"/><rect x="1872" y="188" width="4" height="1.5" fill="#569CD6"/><rect x="1876" y="188" width="1" height="1.5" fill="#F44747"/><rect x="1877" y="188" width="10" height="1.5" fill="#569CD6"/><rect x="1887" y="188" width="1" height="1.5" fill="#F44747"/><rect x="1888" y="188" width="3" height="1.5" fill="#569CD6"/><rect x="1891" y="188" width="1" height="1.5" fill="#F44747"/><rect x="1892" y="188" width="9" height="1.5" fill="#569CD6"/><rect x="1901" y="188" width="1" height="1.5" fill="#F44747"/><rect x="1902" y="188" width="39" height="1.5" fill="#569CD6"/><rect x="1941" y="188" width="1" height="1.5" fill="#D4D4D4"/><rect x="1943" y="188" width="1" height="1.5" fill="#D4D4D4"/><rect x="1873" y="190" width="9" height="1.5" fill="#569CD6"/><rect x="1882" y="190" width="1" height="1.5" fill="#D4D4D4"/><rect x="1884" y="190" width="3" height="1.5" fill="#B5CEA8"/><rect x="1873" y="192" width="5" height="1.5" fill="#569CD6"/><rect x="1879" y="192" width="1" height="1.5" fill="#D4D4D4"/><rect x="1881" y="192" width="1" height="1.5" fill="#569CD6"/><rect x="1882" y="192" width="1" height="1.5" fill="#D4D4D4"/><rect x="1884" y="192" width="1" height="1.5" fill="#B5CEA8"/><rect x="1886" y="192" width="1" height="1.5" fill="#569CD6"/><rect x="1887" y="192" width="1" height="1.5" fill="#D4D4D4"/><rect x="1889" y="192" width="3" height="1.5" fill="#B5CEA8"/><rect x="1893" y="192" width="1" height="1.5" fill="#569CD6"/><rect x="1894" y="192" width="1" height="1.5" fill="#D4D4D4"/><rect x="1896" y="192" width="1" height="1.5" fill="#B5CEA8"/><rect x="1898" y="192" width="1" height="1.5" fill="#D4D4D4"/><rect x="1871" y="194" width="1" height="1.5" fill="#D4D4D4"/><rect x="1869" y="196" width="1" height="1.5" fill="#D4D4D4"/><rect x="1867" y="198" width="1" height="1.5" fill="#D4D4D4"/><rect x="1867" y="202" width="1" height="1.5" fill="#6A9955"/><rect x="1869" y="202" width="8" height="1.5" fill="#6A9955"/><rect x="1878" y="202" width="10" height="1.5" fill="#6A9955"/><rect x="1889" y="202" width="5" height="1.5" fill="#6A9955"/><rect x="1895" y="202" width="2" height="1.5" fill="#6A9955"/><rect x="1898" y="202" width="7" height="1.5" fill="#6A9955"/><rect x="1906" y="202" width="10" height="1.5" fill="#6A9955"/><rect x="1917" y="202" width="3" height="1.5" fill="#6A9955"/><rect x="1921" y="202" width="10" height="1.5" fill="#6A9955"/><rect x="1932" y="202" width="8" height="1.5" fill="#6A9955"/><rect x="1867" y="204" width="4" height="1.5" fill="#569CD6"/><rect x="1872" y="204" width="1" height="1.5" fill="#D4D4D4"/><rect x="1869" y="206" width="10" height="1.5" fill="#569CD6"/><rect x="1879" y="206" width="1" height="1.5" fill="#D4D4D4"/><rect x="1881" y="206" width="28" height="1.5" fill="#CE9178"/><rect x="1869" y="208" width="12" height="1.5" fill="#569CD6"/><rect x="1881" y="208" width="1" height="1.5" fill="#D4D4D4"/><rect x="1883" y="208" width="42" height="1.5" fill="#CE9178"/><rect x="1869" y="210" width="13" height="1.5" fill="#569CD6"/><rect x="1882" y="210" width="1" height="1.5" fill="#D4D4D4"/><rect x="1884" y="210" width="30" height="1.5" fill="#CE9178"/><rect x="1869" y="212" width="12" height="1.5" fill="#569CD6"/><rect x="1881" y="212" width="1" height="1.5" fill="#D4D4D4"/><rect x="1883" y="212" width="1" height="1.5" fill="#D4D4D4"/><rect x="1871" y="214" width="1" height="1.5" fill="#D4D4D4"/><rect x="1872" y="214" width="4" height="1.5" fill="#569CD6"/><rect x="1876" y="214" width="1" height="1.5" fill="#F44747"/><rect x="1877" y="214" width="10" height="1.5" fill="#569CD6"/><rect x="1887" y="214" width="1" height="1.5" fill="#F44747"/><rect x="1888" y="214" width="3" height="1.5" fill="#569CD6"/><rect x="1891" y="214" width="1" height="1.5" fill="#F44747"/><rect x="1892" y="214" width="9" height="1.5" fill="#569CD6"/><rect x="1901" y="214" width="1" height="1.5" fill="#F44747"/><rect x="1902" y="214" width="33" height="1.5" fill="#569CD6"/><rect x="1935" y="214" width="1" height="1.5" fill="#D4D4D4"/><rect x="1937" y="214" width="1" height="1.5" fill="#D4D4D4"/><rect x="1873" y="216" width="6" height="1.5" fill="#569CD6"/><rect x="1879" y="216" width="1" height="1.5" fill="#D4D4D4"/><rect x="1881" y="216" width="5" height="1.5" fill="#569CD6"/><rect x="1873" y="218" width="5" height="1.5" fill="#569CD6"/><rect x="1879" y="218" width="1" height="1.5" fill="#D4D4D4"/><rect x="1881" y="218" width="1" height="1.5" fill="#569CD6"/><rect x="1882" y="218" width="1" height="1.5" fill="#D4D4D4"/><rect x="1884" y="218" width="3" height="1.5" fill="#B5CEA8"/><rect x="1888" y="218" width="1" height="1.5" fill="#569CD6"/><rect x="1889" y="218" width="1" height="1.5" fill="#D4D4D4"/><rect x="1891" y="218" width="1" height="1.5" fill="#B5CEA8"/><rect x="1893" y="218" width="1" height="1.5" fill="#569CD6"/><rect x="1894" y="218" width="1" height="1.5" fill="#D4D4D4"/><rect x="1896" y="218" width="1" height="1.5" fill="#B5CEA8"/><rect x="1898" y="218" width="1" height="1.5" fill="#D4D4D4"/><rect x="1873" y="220" width="9" height="1.5" fill="#569CD6"/><rect x="1882" y="220" width="1" height="1.5" fill="#D4D4D4"/><rect x="1884" y="220" width="3" height="1.5" fill="#B5CEA8"/><rect x="1871" y="222" width="1" height="1.5" fill="#D4D4D4"/><rect x="1869" y="224" width="1" height="1.5" fill="#D4D4D4"/><rect x="1867" y="226" width="1" height="1.5" fill="#D4D4D4"/><rect x="1867" y="230" width="1" height="1.5" fill="#6A9955"/><rect x="1869" y="230" width="5" height="1.5" fill="#6A9955"/><rect x="1875" y="230" width="11" height="1.5" fill="#6A9955"/><rect x="1887" y="230" width="3" height="1.5" fill="#6A9955"/><rect x="1891" y="230" width="8" height="1.5" fill="#6A9955"/><rect x="1900" y="230" width="4" height="1.5" fill="#6A9955"/><rect x="1905" y="230" width="2" height="1.5" fill="#6A9955"/><rect x="1908" y="230" width="3" height="1.5" fill="#6A9955"/><rect x="1912" y="230" width="2" height="1.5" fill="#6A9955"/><rect x="1915" y="230" width="3" height="1.5" fill="#6A9955"/><rect x="1919" y="230" width="5" height="1.5" fill="#6A9955"/><rect x="1925" y="230" width="6" height="1.5" fill="#6A9955"/><rect x="1932" y="230" width="4" height="1.5" fill="#6A9955"/><rect x="1937" y="230" width="3" height="1.5" fill="#6A9955"/><rect x="1941" y="230" width="6" height="1.5" fill="#6A9955"/><rect x="1867" y="232" width="4" height="1.5" fill="#569CD6"/><rect x="1872" y="232" width="1" height="1.5" fill="#D4D4D4"/><rect x="1869" y="234" width="10" height="1.5" fill="#569CD6"/><rect x="1879" y="234" width="1" height="1.5" fill="#D4D4D4"/><rect x="1881" y="234" width="29" height="1.5" fill="#CE9178"/><rect x="1869" y="236" width="12" height="1.5" fill="#569CD6"/><rect x="1881" y="236" width="1" height="1.5" fill="#D4D4D4"/><rect x="1883" y="236" width="39" height="1.5" fill="#CE9178"/><rect x="1869" y="238" width="12" height="1.5" fill="#569CD6"/><rect x="1881" y="238" width="1" height="1.5" fill="#D4D4D4"/><rect x="1883" y="238" width="23" height="1.5" fill="#CE9178"/><rect x="1869" y="240" width="12" height="1.5" fill="#569CD6"/><rect x="1881" y="240" width="1" height="1.5" fill="#D4D4D4"/><rect x="1883" y="240" width="18" height="1.5" fill="#CE9178"/><rect x="1869" y="242" width="13" height="1.5" fill="#569CD6"/><rect x="1882" y="242" width="1" height="1.5" fill="#D4D4D4"/><rect x="1884" y="242" width="31" height="1.5" fill="#CE9178"/><rect x="1867" y="244" width="1" height="1.5" fill="#D4D4D4"/></g>
<rect x="1978" y="121" width="1" height="908" fill="#3A3A3A"/>
</svg>
<rect x="1991" y="0" width="1" height="1147" fill="#1A1A1A"/>
<rect x="1991" y="1147" width="1" height="89" fill="#B8B8B8"/>
<path d="M170 149 L170 133 L638 133 L638 367 L425 367 L425 377" fill="none" stroke="#FBBC2E" stroke-width="4" stroke-linejoin="miter" stroke-linecap="square"/>
<path d="M519 357 L519 367" fill="none" stroke="#FBBC2E" stroke-width="4" stroke-linejoin="miter" stroke-linecap="square"/>
<path d="M128 249 L128 261" fill="none" stroke="#FBBC2E" stroke-width="4" stroke-linejoin="miter" stroke-linecap="square"/>
<path d="M212 249 L212 255 L353 255 L353 261" fill="none" stroke="#FBBC2E" stroke-width="4" stroke-linejoin="miter" stroke-linecap="square"/>
<path d="M572 249 L572 261" fill="none" stroke="#FBBC2E" stroke-width="4" stroke-linejoin="miter" stroke-linecap="square"/>
<path d="M128 357 L128 367 L333 367 L333 377" fill="none" stroke="#FBBC2E" stroke-width="4" stroke-linejoin="miter" stroke-linecap="square"/>
<path d="M353 357 L353 377" fill="none" stroke="#FBBC2E" stroke-width="4" stroke-linejoin="miter" stroke-linecap="square"/>
<path d="M393 473 L393 489" fill="none" stroke="#FBBC2E" stroke-width="4" stroke-linejoin="miter" stroke-linecap="square"/>
<path d="M362 255 H528 V261" fill="none" stroke="#FBBC2E" stroke-width="4" stroke-dasharray="10 10"/>
<rect x="91.1" y="153.1" width="157.8" height="91.8" rx="5" fill="#CCCCFA" stroke="#1414FF" stroke-width="2.2"/>
<rect x="514.75" y="180.75" width="113.5" height="64.5" rx="5" fill="#FBC02D" stroke="#F9A84F" stroke-width="1.5"/>
<rect x="12.0" y="265.0" width="233" height="92" rx="5" fill="#FFFFFF" stroke="#FBBC2E" stroke-width="2"/>
<rect x="265.0" y="265.0" width="177" height="92" rx="5" fill="#FFFFFF" stroke="#FBBC2E" stroke-width="2"/>
<rect x="462.0" y="265.0" width="115" height="92" rx="5" fill="#FFFFFF" stroke="#FBBC2E" stroke-width="2"/>
<rect x="306.0" y="378.0" width="174" height="91" rx="5" fill="#FFFFFF" stroke="#FBBC2E" stroke-width="2"/>
<rect x="329.75" y="488.75" width="126.5" height="64.5" rx="5" fill="#FBC02D" stroke="#F9A84F" stroke-width="1.5"/>
<rect x="166" y="149" width="8" height="8" fill="#D1A02B"/>
<rect x="124" y="241" width="8" height="8" fill="#D1A02B"/>
<rect x="208" y="241" width="8" height="8" fill="#D1A02B"/>
<rect x="568" y="241" width="8" height="8" fill="#D1A02B"/>
<rect x="124" y="261" width="8" height="8" fill="#D1A02B"/>
<rect x="349" y="261" width="8" height="8" fill="#D1A02B"/>
<rect x="524" y="261" width="8" height="8" fill="#D1A02B"/>
<rect x="568" y="261" width="8" height="8" fill="#D1A02B"/>
<rect x="124" y="353" width="8" height="8" fill="#D1A02B"/>
<rect x="349" y="353" width="8" height="8" fill="#D1A02B"/>
<rect x="515" y="353" width="8" height="8" fill="#D1A02B"/>
<rect x="329" y="373" width="8" height="8" fill="#D1A02B"/>
<rect x="349" y="373" width="8" height="8" fill="#D1A02B"/>
<rect x="421" y="373" width="8" height="8" fill="#D1A02B"/>
<rect x="389" y="465" width="8" height="8" fill="#D1A02B"/>
<rect x="389" y="485" width="8" height="8" fill="#D1A02B"/>
<text x="102.3" y="204" font-size="20" font-weight="normal" fill="#1F1F1F" text-anchor="start" textLength="134.7" lengthAdjust="spacingAndGlyphs" stroke="#1F1F1F" stroke-width="0.85">HandDetection</text>
<text x="16.2" y="315.7" font-size="20" font-weight="normal" fill="#1F1F1F" text-anchor="start" textLength="223.8" lengthAdjust="spacingAndGlyphs" stroke="#1F1F1F" stroke-width="0.85">DetectionsToRenderData</text>
<text x="269" y="315.9" font-size="20" font-weight="normal" fill="#1F1F1F" text-anchor="start" textLength="167.4" lengthAdjust="spacingAndGlyphs" stroke="#1F1F1F" stroke-width="0.85">RectToRenderData</text>
<text x="466" y="316" font-size="20" font-weight="normal" fill="#1F1F1F" text-anchor="start" textLength="105.8" lengthAdjust="spacingAndGlyphs" stroke="#1F1F1F" stroke-width="0.85">FlowLimiter</text>
<text x="520.6" y="217.8" font-size="20" font-weight="normal" fill="#1A1405" text-anchor="start" textLength="102.2" lengthAdjust="spacingAndGlyphs" stroke="#1A1405" stroke-width="0.9">input_video</text>
<text x="310" y="428.1" font-size="20" font-weight="normal" fill="#1F1F1F" text-anchor="start" textLength="165.8" lengthAdjust="spacingAndGlyphs" stroke="#1F1F1F" stroke-width="0.85">AnnotationOverlay</text>
<text x="335.3" y="525" font-size="20" font-weight="normal" fill="#1A1405" text-anchor="start" textLength="115.3" lengthAdjust="spacingAndGlyphs" stroke="#1A1405" stroke-width="0.9">output_video</text>
<text x="92.5" y="232.7" font-size="12" font-weight="normal" fill="#1F1F1F" text-anchor="start" textLength="72.0" lengthAdjust="spacingAndGlyphs" stroke="#1F1F1F" stroke-width="0.25">DETECTIONS</text>
<text x="177.5" y="232.7" font-size="12" font-weight="normal" fill="#1F1F1F" text-anchor="start" textLength="69.5" lengthAdjust="spacingAndGlyphs" stroke="#1F1F1F" stroke-width="0.25">NORM_RECT</text>
<text x="92.5" y="282.8" font-size="12" font-weight="normal" fill="#1F1F1F" text-anchor="start" textLength="72.2" lengthAdjust="spacingAndGlyphs" stroke="#1F1F1F" stroke-width="0.25">DETECTIONS</text>
<text x="88.3" y="345.1" font-size="12" font-weight="normal" fill="#1F1F1F" text-anchor="start" textLength="80.2" lengthAdjust="spacingAndGlyphs" stroke="#1F1F1F" stroke-width="0.25">RENDER_DATA</text>
<text x="318.5" y="283" font-size="12" font-weight="normal" fill="#1F1F1F" text-anchor="start" textLength="70.0" lengthAdjust="spacingAndGlyphs" stroke="#1F1F1F" stroke-width="0.25">NORM_RECT</text>
<text x="313" y="345" font-size="12" font-weight="normal" fill="#1F1F1F" text-anchor="start" textLength="80.8" lengthAdjust="spacingAndGlyphs" stroke="#1F1F1F" stroke-width="0.25">RENDER_DATA</text>
<text x="501.8" y="283" font-size="12" font-weight="normal" fill="#1F1F1F" text-anchor="start" textLength="53.0" lengthAdjust="spacingAndGlyphs" stroke="#1F1F1F" stroke-width="0.25">FINISHED</text>
<text x="567.5" y="283" font-size="12" font-weight="normal" fill="#1F1F1F" text-anchor="start" textLength="7.5" lengthAdjust="spacingAndGlyphs" stroke="#1F1F1F" stroke-width="0.25">0</text>
<text x="329.3" y="395" font-size="12" font-weight="normal" fill="#1F1F1F" text-anchor="start" textLength="6.7" lengthAdjust="spacingAndGlyphs" stroke="#1F1F1F" stroke-width="0.25">1</text>
<text x="349.3" y="395" font-size="12" font-weight="normal" fill="#1F1F1F" text-anchor="start" textLength="8.1" lengthAdjust="spacingAndGlyphs" stroke="#1F1F1F" stroke-width="0.25">2</text>
<text x="370.4" y="395" font-size="12" font-weight="normal" fill="#1F1F1F" text-anchor="start" textLength="108.4" lengthAdjust="spacingAndGlyphs" stroke="#1F1F1F" stroke-width="0.25">INPUT_FRAME_GPU</text>
<text x="333" y="456.7" font-size="12" font-weight="normal" fill="#1F1F1F" text-anchor="start" textLength="120.4" lengthAdjust="spacingAndGlyphs" stroke="#1F1F1F" stroke-width="0.25">OUTPUT_FRAME_GPU</text>
<rect x="0" y="1029" width="1990" height="1" fill="#C8C8C8"/>
<rect x="-5" y="1035" width="100" height="29" fill="#FFFFFF" filter="url(#tabsh)"/>
<rect x="0" y="1064" width="1991" height="172" fill="#FFFFFF"/>
<rect x="95.5" y="1063" width="1895" height="1" fill="#C8C8C8"/>
<text x="10.5" y="1052.6" font-size="14" font-weight="normal" fill="#7A7A7A" text-anchor="start" textLength="60" lengthAdjust="spacingAndGlyphs" stroke="#7A7A7A" stroke-width="0.55">Feedback</text>
<text x="2.5" y="1080.7" font-size="14" font-weight="normal" fill="#1A1A1A" text-anchor="start" textLength="56" lengthAdjust="spacingAndGlyphs" stroke="#1A1A1A" stroke-width="0.2">Uploader</text>
<text x="72" y="1083" font-size="14" font-weight="normal" fill="#1A1A1A" text-anchor="start" textLength="269.5" lengthAdjust="spacingAndGlyphs" stroke="#1A1A1A" stroke-width="0.6">Uploaded graph &#x27;hand_detection_gpu.pbtxt&#x27;</text>
<text x="2.5" y="1108.7" font-size="14" font-weight="normal" fill="#1A1A1A" text-anchor="start" textLength="56" lengthAdjust="spacingAndGlyphs" stroke="#1A1A1A" stroke-width="0.2">Uploader</text>
<text x="72" y="1111" font-size="14" font-weight="normal" fill="#1A1A1A" text-anchor="start" textLength="288.5" lengthAdjust="spacingAndGlyphs" stroke="#1A1A1A" stroke-width="0.6">Uploaded graph &#x27;hand_detection_mobile.pbtxt&#x27;</text>
</svg>
</body></html>
